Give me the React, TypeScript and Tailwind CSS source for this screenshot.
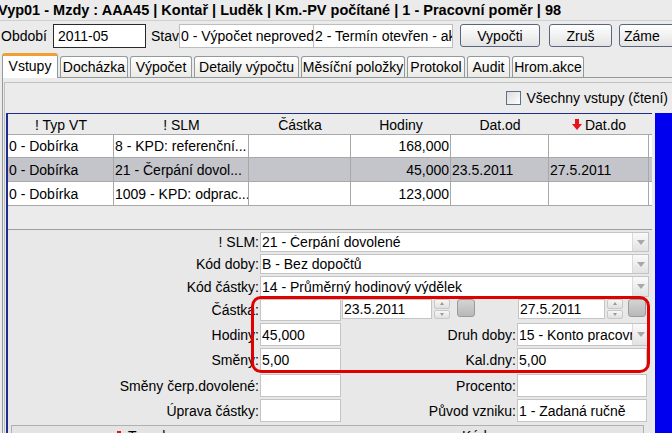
import React from "react";

const Arrow = () => (
  <svg width="8" height="5" viewBox="0 0 8 5"><path d="M0 0h8L4 5z" fill="#a8a8a8" /></svg>
);

const ComboBtn = () => (
  <div className="w-[16px] h-full shrink-0 flex items-center justify-center bg-gradient-to-b from-[#fafafa] to-[#e2e2e2] border-l border-[#dadada]">
    <Arrow />
  </div>
);

const Spinner = () => (
  <div className="w-[16px] h-[20px] shrink-0 flex flex-col gap-[1px] ml-[2px]">
    <div className="flex-1 bg-gradient-to-b from-[#f7f7f7] to-[#e0e0e0] border border-[#c8c8c8] rounded-[2px] flex items-center justify-center">
      <svg width="4" height="3" viewBox="0 0 4 3"><path d="M0 3h4L2 0z" fill="#999" /></svg>
    </div>
    <div className="flex-1 bg-gradient-to-b from-[#f7f7f7] to-[#e0e0e0] border border-[#c8c8c8] rounded-[2px] flex items-center justify-center">
      <svg width="4" height="3" viewBox="0 0 4 3"><path d="M0 0h4L2 3z" fill="#999" /></svg>
    </div>
  </div>
);

const DateBtn = () => (
  <div className="w-[18px] h-[18px] shrink-0 rounded-[3px] border border-[#9a9a9a] bg-gradient-to-b from-[#d4d4d4] to-[#b8b8b8]" />
);

const Field = ({ w, children, combo }: { w: string; children?: React.ReactNode; combo?: boolean }) => (
  <div className={`${w} h-full shrink-0 bg-white border border-[#c4c4c4] flex items-center overflow-hidden whitespace-nowrap`}>
    <div className="flex-1 pl-[1px] overflow-hidden">{children}</div>
    {combo && <ComboBtn />}
  </div>
);

const Label = ({ children, w }: { children: React.ReactNode; w: string }) => (
  <div className={`${w} h-full shrink-0 flex items-center justify-end pr-[1px] whitespace-nowrap`}>{children}</div>
);

const Tab = ({ children, w }: { children: React.ReactNode; w: string }) => (
  <div className={`${w} h-[21px] shrink-0 ml-[2px] border border-b-0 border-[#919b9c] rounded-t-[3px] bg-gradient-to-b from-white to-[#ebeae5] flex items-center justify-center whitespace-nowrap`}>
    {children}
  </div>
);

const Btn = ({ children, w, cls = "justify-center" }: { children: React.ReactNode; w: string; cls?: string }) => (
  <div className={`${w} h-[23px] shrink-0 border border-[#5a6680] rounded-[3px] bg-gradient-to-b from-white to-[#e4e4e4] flex items-center ${cls}`}>
    {children}
  </div>
);

const cols = ["w-[106px]", "w-[135px]", "w-[102px]", "w-[100px]", "w-[98px]", "w-[100px]"];

const rows = [
  ["0 - Dobírka", "8 - KPD: referenční...", "", "168,000", "", ""],
  ["0 - Dobírka", "21 - Čerpání dovol...", "", "45,000", "23.5.2011", "27.5.2011"],
  ["0 - Dobírka", "1009 - KPD: odprac...", "", "123,000", "", ""],
];

export default function App() {
  return (
    <div className="w-[672px] h-[433px] overflow-hidden relative bg-[#ebebeb] text-[14px] text-black font-['Liberation_Sans',Arial,sans-serif] leading-none">
      {/* title */}
      <div className="h-[21px] border-b border-[#cfcfcf] flex items-center whitespace-nowrap font-bold text-[14.5px] -ml-[2px] pt-[1px]">
        Vyp01 - Mzdy : AAA45 | Kontař | Luděk | Km.-PV počítané | 1 - Pracovní poměr | 98
      </div>
      {/* row 2 */}
      <div className="h-[29px] flex items-center whitespace-nowrap">
        <div className="w-[53px] shrink-0 pl-[1px]">Období</div>
        <div className="w-[93px] h-[24px] shrink-0 bg-white border border-[#2a2a2a] flex items-center pl-[4px]">2011-05</div>
        <div className="w-[33px] shrink-0 pl-[5px]">Stav</div>
        <div className="w-[135px] h-[24px] shrink-0 bg-white border border-[#bdbdbd] flex items-center pl-[1px] overflow-hidden">0 - Výpočet neprovede</div>
        <div className="w-[139px] h-[24px] shrink-0 bg-white border border-[#bdbdbd] border-l-0 flex items-center pl-[1px] overflow-hidden">2 - Termín otevřen - ak</div>
        <div className="ml-[7px] shrink-0"><Btn w="w-[80px]">Vypočti</Btn></div>
        <div className="ml-[9px] shrink-0"><Btn w="w-[63px]">Zruš</Btn></div>
        <div className="ml-[7px] shrink-0"><Btn w="w-[80px]" cls="justify-start pl-[4px]">Záme</Btn></div>
      </div>
      {/* tabs */}
      <div className="h-[27px] flex items-end whitespace-nowrap">
        <div className="w-[56px] h-[25px] shrink-0 ml-[2px] bg-white border-x border-[#919b9c] border-t-[3px] border-t-[#f0a030] rounded-t-[3px] flex items-center justify-center pb-[3px] relative top-[1px]">
          Vstupy
        </div>
        <Tab w="w-[68px]">Docházka</Tab>
        <Tab w="w-[62px]">Výpočet</Tab>
        <Tab w="w-[105px]">Detaily výpočtu</Tab>
        <Tab w="w-[104px]">Měsíční položky</Tab>
        <Tab w="w-[58px]">Protokol</Tab>
        <Tab w="w-[43px]">Audit</Tab>
        <Tab w="w-[72px]">Hrom.akce</Tab>
      </div>
      {/* panel */}
      <div className="ml-[2px] h-[356px] border-t border-l border-[#919b9c] bg-[#ebebeb]">
        <div className="mt-[4px] ml-[1px] h-[351px] border-t border-l border-[#c0c0c0]">
          <div className="h-[30px] flex items-center justify-end pr-[4px] whitespace-nowrap">
            <div className="w-[15px] h-[14px] shrink-0 border border-[#5f6f86] bg-gradient-to-br from-[#dcdcdc] to-white mr-[5px]" />
            Všechny vstupy (čtení)
          </div>
          {/* grid + form frame */}
          <div className="ml-[1px] h-[320px] flex">
            <div className="w-[646px] shrink-0 border-t border-l-2 border-[#1f2d8f] flex flex-col">
              {/* header */}
              <div className="h-[20px] flex">
                {["! Typ VT", "! SLM", "Částka", "Hodiny", "Dat.od"].map((h, i) => (
                  <div key={i} className={`${cols[i]} shrink-0 flex items-center justify-center pt-[1px]`}>{h}</div>
                ))}
                <div className={`${cols[5]} shrink-0 flex items-center justify-center gap-[3px] pt-[1px]`}>
                  <svg width="10" height="11" viewBox="0 0 10 11"><path d="M3 0h4v5h3L5 11 0 5h3z" fill="#e8141c" /></svg>
                  Dat.do
                </div>
              </div>
              {rows.map((r, ri) => (
                <div key={ri} className={`h-[24px] flex border-b border-[#a8a8a8] ${ri === 0 ? "border-t" : ""} ${ri === 1 ? "bg-[#c4c4cb]" : "bg-white"}`}>
                  {r.map((c, ci) => (
                    <div key={ci} className={`${cols[ci]} shrink-0 border-r border-[#a8a8a8] flex items-center whitespace-nowrap overflow-hidden ${ci === 3 ? "justify-end pr-[1px]" : "pl-[1px]"}`}>
                      {c}
                    </div>
                  ))}
                </div>
              ))}
              <div className="h-[23px]" />
              {/* form */}
              <div className="flex-1 border-t border-[#9c9c9c] bg-[#e8e8e8] flex flex-col whitespace-nowrap">
                <div className="h-[20px] mt-[2px] flex">
                  <Label w="w-[252px]">! SLM:</Label>
                  <Field w="w-[389px]" combo>21 - Čerpání dovolené</Field>
                </div>
                <div className="h-[20px] mt-[2px] flex">
                  <Label w="w-[252px]">Kód doby:</Label>
                  <Field w="w-[389px]" combo>B - Bez dopočtů</Field>
                </div>
                <div className="h-[21px] mt-[2px] flex">
                  <Label w="w-[252px]">Kód částky:</Label>
                  <Field w="w-[389px]" combo>14 - Průměrný hodinový výdělek</Field>
                </div>
                <div className="h-[22px] mt-[2px] flex items-center">
                  <Label w="w-[252px]">Částka:</Label>
                  <Field w="w-[81px]" />
                  <div className="ml-[1px] h-[20px] self-start shrink-0"><Field w="w-[90px]">23.5.2011</Field></div>
                  <div className="self-start shrink-0"><Spinner /></div>
                  <div className="ml-[7px] self-start shrink-0"><DateBtn /></div>
                  <div className="ml-[43px] h-[20px] self-start shrink-0"><Field w="w-[87px]">27.5.2011</Field></div>
                  <div className="self-start shrink-0"><Spinner /></div>
                  <div className="ml-[5px] self-start shrink-0"><DateBtn /></div>
                </div>
                <div className="h-[23px] mt-[2px] flex">
                  <Label w="w-[252px]">Hodiny:</Label>
                  <Field w="w-[81px]">45,000</Field>
                  <Label w="w-[176px]">Druh doby:</Label>
                  <Field w="w-[132px]" combo>15 - Konto pracovn</Field>
                </div>
                <div className="h-[23px] mt-[2px] flex">
                  <Label w="w-[252px]">Směny:</Label>
                  <Field w="w-[81px]">5,00</Field>
                  <Label w="w-[176px]">Kal.dny:</Label>
                  <Field w="w-[130px]">5,00</Field>
                </div>
                <div className="h-[23px] mt-[3px] flex">
                  <Label w="w-[252px]">Směny čerp.dovolené:</Label>
                  <Field w="w-[81px]" />
                  <Label w="w-[176px]">Procento:</Label>
                  <Field w="w-[130px]" />
                </div>
                <div className="h-[23px] mt-[2px] flex">
                  <Label w="w-[252px]">Úprava částky:</Label>
                  <Field w="w-[81px]" />
                  <Label w="w-[176px]">Původ vzniku:</Label>
                  <Field w="w-[130px]">1 - Zadaná ručně</Field>
                </div>
                <div className="mt-[3px] flex-1 border-t border-[#6a6a6a] ml-[3px] mr-[8px] bg-[#e4e4e4] border-x border-[#b0b0b0] relative overflow-hidden">
                  <div className="absolute left-[102px] top-[3px] flex items-center gap-[4px]">
                    <svg width="10" height="11" viewBox="0 0 10 11"><path d="M3 0h4v5h3L5 11 0 5h3z" fill="#e8141c" /></svg>
                    Typ akce
                  </div>
                  <div className="absolute left-[450px] top-[3px]">Kód</div>
                </div>
              </div>
            </div>
            <div className="w-[3px] shrink-0" />
            <div className="flex-1 bg-[#0000ee]" />
          </div>
        </div>
      </div>
      {/* red highlight */}
      <div className="absolute left-[251px] top-[296px] w-[399px] h-[77px] border-[3px] border-[#e00000] rounded-[10px] pointer-events-none" />
    </div>
  );
}
